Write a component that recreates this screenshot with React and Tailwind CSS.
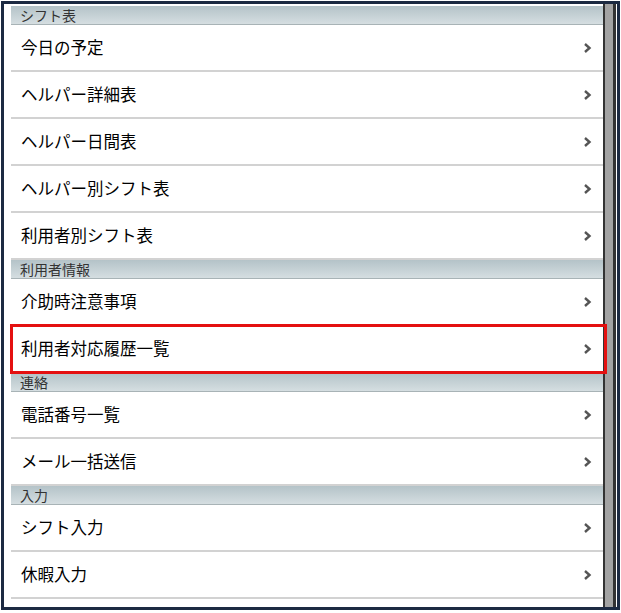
const sections = [
  { title: "シフト表", items: ["今日の予定", "ヘルパー詳細表", "ヘルパー日間表", "ヘルパー別シフト表", "利用者別シフト表"] },
  { title: "利用者情報", items: ["介助時注意事項", "利用者対応履歴一覧"] },
  { title: "連絡", items: ["電話番号一覧", "メール一括送信"] },
  { title: "入力", items: ["シフト入力", "休暇入力"] },
];

const highlighted = "利用者対応履歴一覧";

function Chevron() {
  return (
    <svg width="9" height="12" viewBox="0 0 9 12" className="shrink-0">
      <path d="M2 2 L6.5 6 L2 10" fill="none" stroke="#555" strokeWidth="2.4" />
    </svg>
  );
}

function SectionHeader({ title }) {
  return (
    <div className="h-[19px] flex items-center pl-[9px] text-[14px] text-[#333] bg-gradient-to-b from-[#b4c3c8] to-[#d5dee1] border-b border-[#a8b3b6] leading-none">
      {title}
    </div>
  );
}

function Row({ label }) {
  return (
    <div className="relative h-[47px] flex items-center justify-between pl-[10px] pr-[11px] border-b-2 border-[#d2d2d2] bg-white">
      <span className="text-[16.5px] text-black leading-none">{label}</span>
      <Chevron />
      {label === highlighted && (
        <div className="absolute -left-[1px] -right-[4px] -top-[2px] -bottom-[3px] border-[3px] border-[#e41010]" />
      )}
    </div>
  );
}

export default function App() {
  return (
    <div
      className="w-[621px] h-[613px] bg-white pt-[1px] pl-[1px] pr-[1px] pb-[3px]"
      style={{ fontFamily: '"Noto Sans CJK JP", "Noto Sans", sans-serif' }}
    >
      <div className="h-full border-[3px] border-[#1c2a42] flex">
        <div className="flex-1 pl-[7px] pt-[2px] overflow-visible">
          {sections.map((s) => (
            <div key={s.title}>
              <SectionHeader title={s.title} />
              {s.items.map((it) => (
                <Row key={it} label={it} />
              ))}
            </div>
          ))}
        </div>
        <div className="w-[13px] flex shrink-0">
          <div className="w-[2px] bg-[#333]" />
          <div className="w-[8px] bg-[#a3a3a3]" />
          <div className="w-[3px] bg-[#333]" />
        </div>
        <div className="w-[1px] bg-white" />
      </div>
    </div>
  );
}
